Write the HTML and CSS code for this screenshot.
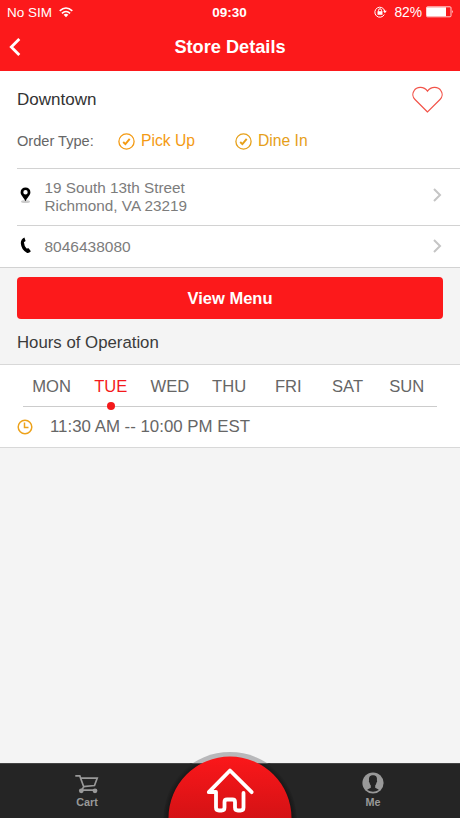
FILE: index.html
```html
<!DOCTYPE html>
<html lang="en">
<head>
<meta charset="utf-8">
<title>Store Details</title>
<link rel="stylesheet" href="styles.css">
</head>
<body>
<div class="app">
  <header class="header">
    <div class="status">
      <div class="status-left">
        <span>No SIM</span>
        <svg class="wifi" width="14" height="11" viewBox="0 0 14 11" fill="none" stroke="#fff" stroke-width="1.6"><path d="M.7 3.8Q7-1.8 13.3 3.8M2.900 6.300q4.100-3.600 8.200 0"/><path d="M4.600 7.700Q7 5.900 9.400 7.700L7 10.300z" fill="#fff" stroke="none"/></svg>
      </div>
      <span class="time">09:30</span>
      <div class="status-right">
        <svg width="13" height="12" viewBox="0 0 13 12" fill="none" stroke="#fff"><path d="M10.300 8.500A5 5 0 1 1 10.700 5"/><path d="M9 4.800h3.800L10.900 7.200z" fill="#fff" stroke="none"/><path d="M4.500 5.500V4.300a1.500 1.500 0 0 1 3 0v1.200"/><path d="M3.500 5.200h5v3.600h-5z" fill="#fff" stroke="none"/></svg>
        <span class="percent">82%</span>
        <svg width="28" height="12" viewBox="0 0 28 12"><rect x=".5" y=".8" width="24.500" height="10" rx="1" fill="none" stroke="#fff" stroke-opacity=".8"/><path d="M1 1.300h19v9H1z" fill="#fff"/><path d="M26 4q1.500 1.800 0 3.600z" fill="#fff"/></svg>
      </div>
    </div>
    <div class="navbar">
      <svg class="back" width="12" height="18" viewBox="0 0 12 18" fill="none" stroke="#fff" stroke-width="2.800"><path d="M10.300 1L2.300 9l8 8"/></svg>
      <h1>Store Details</h1>
    </div>
  </header>

  <section class="store">
    <div class="store-name">
      <h2>Downtown</h2>
      <svg width="31" height="28" viewBox="0 0 31 28" fill="none" stroke="#f2544a" stroke-width="1.200"><path d="M15.500 26L3 13.500C.5 11 .3 7.300 2 4.800 4.800.2 12 .2 15.500 5.200 19 .2 26.200.2 29 4.800 30.700 7.300 30.500 11 28 13.500z"/></svg>
    </div>
    <div class="order-types">
      <span class="label">Order Type:</span>
      <span class="type pickup"><svg width="17" height="17" viewBox="0 0 17 17" fill="none" stroke="currentColor"><circle cx="8.500" cy="8.500" r="7.600" stroke-width="1.300"/><path d="M5.200 9l2.200 2.200 4.300-5.300" stroke-width="1.900"/></svg>Pick Up</span>
      <span class="type dinein"><svg width="17" height="17" viewBox="0 0 17 17" fill="none" stroke="currentColor"><circle cx="8.500" cy="8.500" r="7.600" stroke-width="1.300"/><path d="M5.200 9l2.200 2.200 4.300-5.300" stroke-width="1.900"/></svg>Dine In</span>
    </div>
    <div class="row address">
      <svg class="pin" width="12" height="17" viewBox="0 0 12 17"><ellipse cx="5.500" cy="14.500" rx="4.500" ry="1.600" fill="#ccc"/><path fill="#000" fill-rule="evenodd" d="M5.500.4a4.900 4.900 0 0 1 4.900 4.900C10.400 8.700 7 10.500 5.500 14.300 4 10.500.6 8.700.6 5.300A4.900 4.900 0 0 1 5.500.4zm0 2.700a2.200 2.200 0 1 0 0 4.400 2.200 2.200 0 0 0 0-4.400z"/></svg>
      <p>19 South 13th Street<br>Richmond, VA 23219</p>
      <svg class="chevron" width="9" height="14" viewBox="0 0 9 14" fill="none" stroke="#c5c5c5" stroke-width="2"><path d="M1 1l6 6-6 6"/></svg>
    </div>
    <div class="row phone">
      <svg class="handset" width="12" height="17" viewBox="0 0 12 17"><path d="M4.400.4L5.600 3.900 3.900 5.200Q4.100 8.700 6.600 11.500L8.600 11.200 10.900 14.300Q8.800 16.500 6.800 15.700 1.300 12.800.8 6.300.7 2 4.400.4z" fill="#000"/></svg>
      <p class="number">8046438080</p>
      <svg class="chevron" width="9" height="14" viewBox="0 0 9 14" fill="none" stroke="#c5c5c5" stroke-width="2"><path d="M1 1l6 6-6 6"/></svg>
    </div>
  </section>

  <button class="menu-button">View Menu</button>
  <h3>Hours of Operation</h3>

  <section class="hours">
    <div class="days">
      <span>MON</span><span class="active">TUE</span><span>WED</span><span>THU</span><span>FRI</span><span>SAT</span><span>SUN</span>
    </div>
    <div class="open">
      <svg width="16" height="16" viewBox="0 0 16 16" fill="none" stroke="#eda21b" stroke-width="1.500"><circle cx="8" cy="8" r="6.800"/><path d="M7.500 3.500v5h4"/></svg>
      <span>11:30 AM -- 10:00 PM EST</span>
    </div>
  </section>

  <nav class="tabs">
    <div class="tab cart">
      <svg width="24" height="20" viewBox="0 0 24 20" fill="none" stroke="#999" stroke-width="1.700"><path d="M.3 1.900h4.500l3.900 10.900M5.800 4.200h16.400l-2.700 7.300L8.200 12.700M8.700 12.900l-2.200 3.200h14"/><circle cx="6.300" cy="16.800" r="2.400" fill="#999" stroke="none"/><circle cx="20" cy="16.800" r="2.400" fill="#999" stroke="none"/></svg>
      <span>Cart</span>
    </div>
    <div class="tab me">
      <svg width="22" height="22" viewBox="0 0 22 22"><circle cx="11" cy="11" r="10.600" fill="#999"/><path d="M11 3.300c3.500 0 4.300 2.200 3.900 5.200.5.500.1 1.900-.5 2.200-.2 1.500-.8 2.200-1.200 2.900v2.200c1 .9 2.900 1.100 3.600 2.200Q11 21.300 5.200 18c.7-1.100 2.600-1.300 3.600-2.200v-2.200c-.4-.7-1-1.400-1.200-2.900-.6-.3-1-1.700-.5-2.200-.4-3 .4-5.200 3.900-5.200z" fill="#252525"/></svg>
      <span>Me</span>
    </div>
    <svg class="home" width="140" height="68" viewBox="0 0 140 68">
      <defs>
        <linearGradient id="red" x1="0" y1="0" x2="0" y2="1"><stop offset="0" stop-color="#fb171a"/><stop offset="1" stop-color="#d41215"/></linearGradient>
        <radialGradient id="shade" gradientUnits="userSpaceOnUse" cx="70" cy="70" r="68"><stop offset=".9" stop-color="#151515"/><stop offset="1" stop-color="#252525"/></radialGradient>
        <clipPath id="above"><path d="M0 0h140v13.500H0z"/></clipPath>
      </defs>
      <circle cx="70" cy="70" r="68" fill="#b8b8ba" clip-path="url(#above)"/>
      <path d="M3 68Q6 32 30 13.500h80Q134 32 137 68z" fill="url(#shade)"/>
      <path d="M8.500 68A61.500 61.500 0 0 1 131.500 68z" fill="url(#red)"/>
      <path d="M56 43v15.500q0 3 3 3h2.500q3 0 3-3v-5.500q0-2.500 2.500-2.500h5.500q2.500 0 2.500 2.500v5.500q0 3 3 3h2.500q3 0 3-3V44M56 43l-7.200.2L70 21.500 91.700 43.200" fill="none" stroke="#fff" stroke-width="3.800" stroke-linecap="round" stroke-linejoin="round" transform="translate(0 -1)"/>
    </svg>
  </nav>
</div>
</body>
</html>
```
FILE: styles.css
```css
* { box-sizing: border-box; }
body { margin: 0; font-family: "Liberation Sans", Arial, sans-serif; }
h1, h2, h3, p { margin: 0; font-weight: 400; }
svg { display: block; flex: none; }
.app { width: 460px; height: 818px; display: flex; flex-direction: column; background: #f4f4f4; overflow: hidden; }

.header { height: 71px; background: #fc191b; color: #fff; }
.status { height: 24px; display: grid; grid-template-columns: 1fr auto 1fr; align-items: center; padding: 0 6px 0 7px; font-size: 13.5px; }
.status-left, .status-right { display: flex; align-items: center; }
.status-left { gap: 7px; }
.status-right { justify-content: flex-end; }
.percent { margin: 0 4px 0 7px; font-size: 13.8px; }
.time { font-weight: 700; font-size: 13.5px; margin-left: -2px; }
.navbar { height: 46px; display: grid; grid-template-columns: 1fr auto 1fr; align-items: center; padding: 0 9px; }
.navbar h1 { font-size: 18.2px; font-weight: 700; }

.store { height: 197px; background: #fff; border-bottom: 1px solid #d2d2d2; }
.store-name { height: 57px; display: flex; align-items: center; justify-content: space-between; padding: 0 17px; color: #333; }
.store-name h2 { font-size: 17px; }
.order-types { height: 40px; display: flex; align-items: center; padding: 0 17px 14px; }
.label { width: 101px; color: #666; font-size: 14.6px; }
.type { display: flex; align-items: center; gap: 6px; font-size: 15.7px; }
.pickup { width: 117px; color: #f49a12; }
.dinein { color: #e6a019; }
.row { margin-left: 17px; padding-right: 18px; border-top: 1px solid #d2d2d2; display: flex; align-items: center; color: #7c7c7c; font-size: 15.3px; line-height: 18px; }
.row p { flex: 1; }
.address { height: 57px; }
.phone { height: 42px; }
.pin, .handset { margin: 0 12.5px 0 3px; }
.pin, .address .chevron { margin-bottom: 4px; }
.phone .handset, .phone .chevron { margin-bottom: 2px; }
.number { font-size: 15.5px; }

.menu-button { height: 42px; margin: 9px 17px 0; padding: 0; border: 0; border-radius: 4px; background: #fc191b; color: #fff; font: 700 16.5px "Liberation Sans", Arial, sans-serif; }
h3 { height: 45px; padding-left: 17px; line-height: 47px; font-size: 16.8px; color: #3b3b3b; }

.hours { height: 84px; background: #fff; border: solid #d8d8d8; border-width: 1px 0; }
.days { height: 42px; margin: 0 23px; border-bottom: 1px solid #ccc; display: grid; grid-template-columns: repeat(7, 59.2px); font-size: 16.6px; color: #666; line-height: 43px; text-align: center; }
.days span { margin-left: -2px; }
.active { position: relative; color: #f4191b; }
.active::after { content: ""; position: absolute; left: 27px; top: 37px; width: 8px; height: 8px; border-radius: 50%; background: #f4191b; }
.open { height: 40px; display: flex; align-items: center; gap: 17px; padding-left: 17px; font-size: 16.85px; color: #666; }

.tabs { position: relative; height: 55px; margin-top: auto; background: #252525; display: flex; justify-content: space-between; padding: 0 75px; border-top: 1px solid #444; color: #999; font-size: 10.8px; font-weight: 700; }
.tab { display: flex; flex-direction: column; align-items: center; width: 24px; line-height: 12px; }
.cart { padding-top: 10px; gap: 2px; }
.me { padding-top: 8px; gap: 2px; }
.home { position: absolute; left: 160px; bottom: 0; }
```
